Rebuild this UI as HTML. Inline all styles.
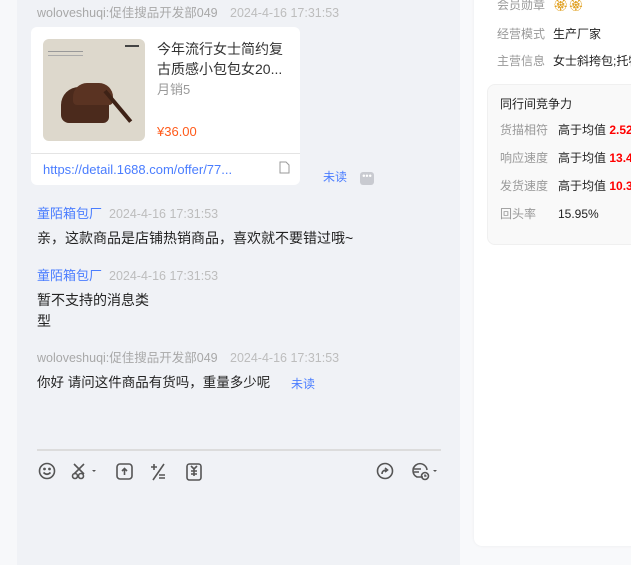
<!DOCTYPE html>
<html><head><meta charset="utf-8"><style>
*{margin:0;padding:0;box-sizing:border-box}
body{width:631px;height:565px;overflow:hidden;position:relative;background:#f0f2f6;font-family:"Liberation Sans","Noto Sans CJK SC",sans-serif;font-size:14px;color:#222}
.a{position:absolute;white-space:nowrap;line-height:18px}
.g{color:#a8a8a8;font-size:12.5px}
.b{color:#4a7dff}
.t{color:#bdbdbd;font-size:12.5px}
.n{font-size:13px}
</style></head><body>
<div class="a" style="left:0;top:0;width:17px;height:565px;background:#f7f8fa"></div>
<div class="a g" style="left:37px;top:4px">woloveshuqi:促佳搜品开发部049</div>
<div class="a t" style="left:230px;top:4px">2024-4-16 17:31:53</div>
<div class="a" style="left:31px;top:27px;width:269px;height:158px;background:#fff;border-radius:6px"></div>
<div class="a" style="left:43px;top:39px;width:102px;height:102px;background:#ddd8cc;border-radius:6px;overflow:hidden">
 <div class="a" style="left:18px;top:48px;width:48px;height:36px;background:#4b2a1c;border-radius:18px 14px 6px 8px"></div>
 <div class="a" style="left:30px;top:44px;width:40px;height:22px;background:#5a3322;border-radius:14px 14px 4px 4px"></div>
 <div class="a" style="left:60px;top:52px;width:4px;height:40px;background:#3e2216;transform:rotate(-40deg);transform-origin:top"></div>
 <div class="a" style="left:82px;top:6px;width:14px;height:2px;background:#444"></div>
 <div class="a" style="left:5px;top:12px;width:35px;height:1px;background:#999"></div>
 <div class="a" style="left:5px;top:16px;width:35px;height:1px;background:#aaa"></div>
</div>
<div class="a" style="left:157px;top:39px;font-size:14px;color:#333;line-height:20px">今年流行女士简约复<br>古质感小包包女20...</div>
<div class="a" style="left:157px;top:81px;font-size:13px;color:#999">月销5</div>
<div class="a" style="left:157px;top:123px;color:#ff5a1a;font-size:13px">¥36.00</div>
<div class="a" style="left:31px;top:153px;width:269px;height:1px;background:#e4e4e4"></div>
<div class="a" style="left:43px;top:161px;color:#4a7dff;font-size:13px">https://detail.1688.com/offer/77...</div>
<svg class="a" style="left:279px;top:161px" width="11" height="13" viewBox="0 0 11 13"><path d="M1 1h6l3 3v8H1z" fill="none" stroke="#999"/></svg>
<div class="a b" style="left:323px;top:168px;font-size:12px">未读</div>
<div class="a" style="left:360px;top:172px;width:14px;height:13px;background:#c8cad0;border-radius:3px;color:#fff;font-size:9px;line-height:8px;text-align:center">•••</div>

<div class="a b n" style="left:37px;top:205px">童陌箱包厂</div>
<div class="a t" style="left:109px;top:205px">2024-4-16 17:31:53</div>
<div class="a" style="left:37px;top:229px">亲，这款商品是店铺热销商品，喜欢就不要错过哦~</div>
<div class="a b n" style="left:37px;top:267px">童陌箱包厂</div>
<div class="a t" style="left:109px;top:267px">2024-4-16 17:31:53</div>
<div class="a" style="left:37px;top:290px;line-height:21px">暂不支持的消息类<br>型</div>
<div class="a g" style="left:37px;top:349px">woloveshuqi:促佳搜品开发部049</div>
<div class="a t" style="left:230px;top:349px">2024-4-16 17:31:53</div>
<div class="a" style="left:37px;top:374px;font-size:13.5px">你好 请问这件商品有货吗，重量多少呢</div>
<div class="a b" style="left:291px;top:375px;font-size:12px">未读</div>

<div class="a" style="left:37px;top:449px;width:404px;height:2px;background:#dcdcdc"></div>
<svg class="a" style="left:37px;top:461px" width="404" height="22" viewBox="0 0 404 22" fill="none" stroke="#555" stroke-width="1.6">
<circle cx="10" cy="10" r="7.5"/><circle cx="7.5" cy="8" r=".6" fill="#555"/><circle cx="12.5" cy="8" r=".6" fill="#555"/><path d="M6.5 11.5q3.5 3.5 7 0"/>
<path d="M37 3l10 10M47 3L37 13"/><circle cx="38" cy="15" r="2.5"/><circle cx="44" cy="15" r="2.5"/><path d="M55 9l2 2 2-2z" fill="#555" stroke="none"/>
<rect x="80" y="3" width="15" height="15" rx="3"/><path d="M87.5 14V8M85 10l2.5-2.5L90 10"/>
<path d="M117 3v6M114 6h6M127 3l-11 16M122 14h6M122 17h6"/>
<rect x="150" y="3" width="14" height="16" rx="2.5"/><path d="M154 5l3 3 3-3M157 8v7M154 10h6M154 13h6"/>
<circle cx="348" cy="10" r="7.5"/><path d="M345 13q0-4 5-4M348 7l2.5 2-2.5 2"/>
<path d="M386 16h-6a7 7 0 1 1 10-7"/><path d="M377 8h7M377 11h5"/><circle cx="388" cy="15" r="3.5"/><path d="M388 13.5v1.5h1.5"/><path d="M396 9l2 2 2-2z" fill="#555" stroke="none"/>
</svg>

<div class="a" style="left:460px;top:0;width:171px;height:565px;background:#f8f9fb"></div>
<div class="a" style="left:474px;top:-10px;width:170px;height:556px;background:#fff;border-radius:8px;box-shadow:0 0 3px rgba(0,0,0,.06)"></div>
<div class="a" style="left:497px;top:-4px;color:#999;font-size:12px">会员勋章</div>
<div class="a" style="left:553px;top:-4px;color:#e0a020;font-size:12px">🏵🏵</div>
<div class="a" style="left:497px;top:25px;color:#999;font-size:12px">经营模式</div>
<div class="a" style="left:553px;top:25px;font-size:12px">生产厂家</div>
<div class="a" style="left:497px;top:52px;color:#999;font-size:12px">主营信息</div>
<div class="a" style="left:553px;top:52px;font-size:12px">女士斜挎包;托特</div>
<div class="a" style="left:487px;top:84px;width:160px;height:161px;background:#f9f9f9;border:1px solid #f0f0f0;border-radius:8px"></div>
<div class="a" style="left:500px;top:95px;font-size:12px">同行间竞争力</div>
<div class="a" style="left:500px;top:121px;font-size:12px;color:#999">货描相符</div>
<div class="a" style="left:558px;top:121px;font-size:12px">高于均值 <b style="color:#f00">2.52</b></div>
<div class="a" style="left:500px;top:149px;font-size:12px;color:#999">响应速度</div>
<div class="a" style="left:558px;top:149px;font-size:12px">高于均值 <b style="color:#f00">13.4</b></div>
<div class="a" style="left:500px;top:177px;font-size:12px;color:#999">发货速度</div>
<div class="a" style="left:558px;top:177px;font-size:12px">高于均值 <b style="color:#f00">10.3</b></div>
<div class="a" style="left:500px;top:205px;font-size:12px;color:#999">回头率</div>
<div class="a" style="left:558px;top:205px;font-size:12px">15.95%</div>
</body></html>
